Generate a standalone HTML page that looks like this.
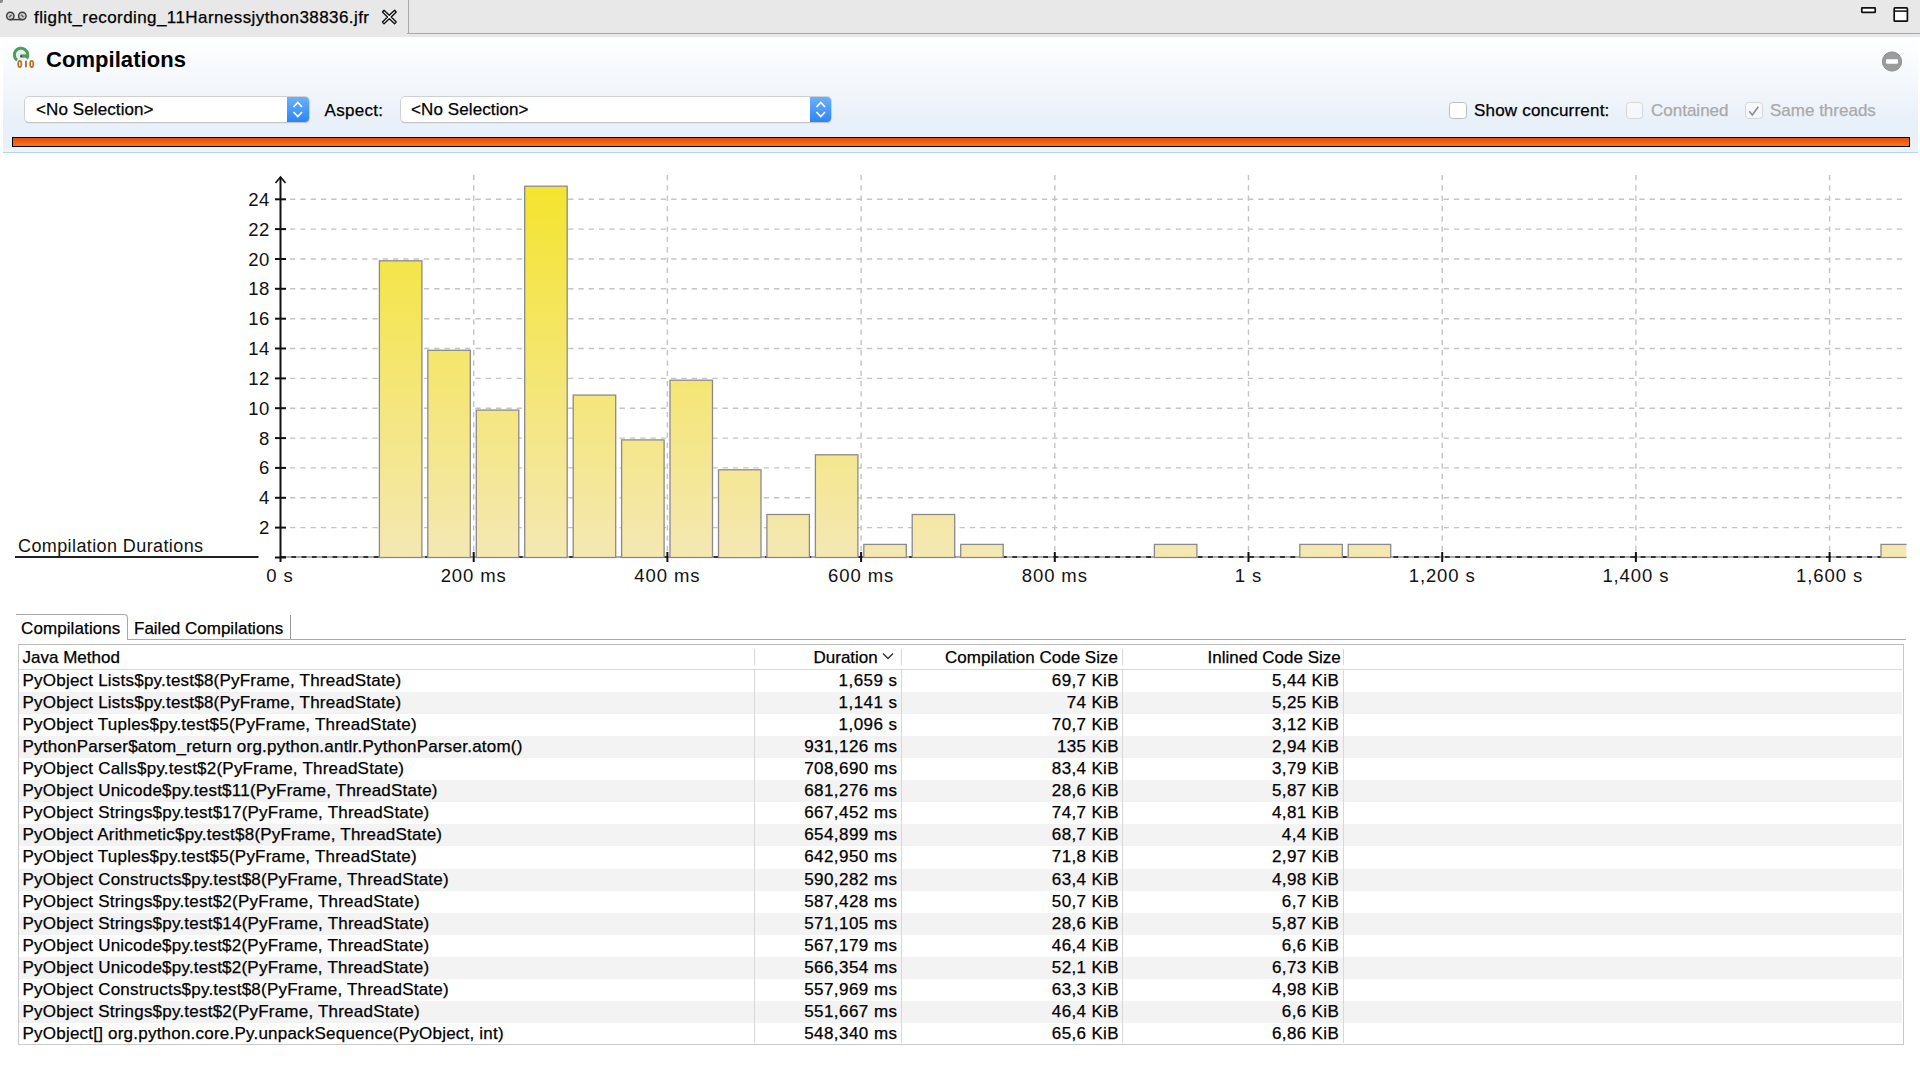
<!DOCTYPE html>
<html><head><meta charset="utf-8"><style>
*{box-sizing:border-box}
html,body{margin:0;padding:0;width:1920px;height:1070px;overflow:hidden;background:#fff;font-family:"Liberation Sans", sans-serif;color:#000}
.t17,.row span{-webkit-text-stroke:0.25px currentColor}
.abs{position:absolute}
#tabbar{position:absolute;left:0;top:0;width:1920px;height:37px;background:#e8e8e8}
.t17{font-size:17px;white-space:nowrap;line-height:1}
#hdr{position:absolute;left:3px;top:37px;width:1915px;height:116px;background:linear-gradient(#ffffff 0px,#fdfeff 8px,#f4f8fc 45px,#ecf2fa 75px,#e8f0f9 84px,#e8f0f9 110px,#f0f5fb 116px);border-bottom:1.5px solid #b9d4f0}
.combo{position:absolute;top:96.5px;height:25px;background:#fff;border-radius:4px;box-shadow:0 0 0 0.7px #c8c8c8, 0 0.8px 1px #b0b0b0}
.step{position:absolute;top:0;right:0;width:21.5px;height:25px;border-radius:0 4px 4px 0;background:linear-gradient(#6cb0fb,#2a86f7)}
.chk{position:absolute;top:101.5px;width:17.5px;height:17.5px;border:1px solid #bdbdbd;border-radius:3.5px;background:#fff}
.row{position:absolute;left:19px;width:1883px;height:22px}
.row span{position:absolute;top:2px;font-size:17px;line-height:1;white-space:nowrap}
.c0{left:3.5px;letter-spacing:0.22px}
.c1{right:1004.5px;letter-spacing:0.45px}
.c2{right:783.1px;letter-spacing:0.35px}
.c3{right:562.9px;letter-spacing:0.35px}
.vd{position:absolute;width:1.2px;background:#d8d8d8}
</style></head><body>
<div id="tabbar"></div>
<div class="abs" style="left:397px;top:-10px;width:11.5px;height:44px;border-right:1.5px solid #a9a9a9;border-top:1.5px solid #a9a9a9;border-top-right-radius:5px"></div>
<div class="abs" style="left:407px;top:32.5px;width:1513px;height:1.5px;background:#a9a9a9"></div>
<svg class="abs" style="left:4px;top:10px" width="24" height="14" viewBox="0 0 24 14">
 <circle cx="6.3" cy="6" r="3.7" fill="#d0d0d0" stroke="#3e3e3e" stroke-width="1.5"/>
 <circle cx="18.3" cy="6" r="3.7" fill="#d0d0d0" stroke="#3e3e3e" stroke-width="1.5"/>
 <line x1="6.3" y1="9.6" x2="18.3" y2="9.6" stroke="#3e3e3e" stroke-width="1.5"/>
 <line x1="5" y1="7.3" x2="7.6" y2="4.7" stroke="#5a5a5a" stroke-width="1.3"/>
 <line x1="17" y1="4.7" x2="19.6" y2="7.3" stroke="#5a5a5a" stroke-width="1.3"/>
</svg>
<div class="abs" style="left:-2.5px;top:-2.5px;width:5px;height:5px;border-radius:50%;background:#8a8a8a"></div>
<div class="abs t17" style="left:34px;top:8.8px;letter-spacing:0.42px">flight_recording_11Harnessjython38836.jfr</div>
<svg class="abs" style="left:380.5px;top:8.5px" width="17" height="16" viewBox="0 0 17 16">
 <path d="M1.5,3 L3,1.3 L8.3,6.3 L13.6,1.3 L15.2,3 L10.2,8 L15.2,13 L13.6,14.7 L8.3,9.7 L3,14.7 L1.5,13 L6.5,8 Z" fill="#fff" stroke="#111" stroke-width="1.4" stroke-linejoin="round"/>
</svg>
<svg class="abs" style="left:1858px;top:4px" width="54" height="22" viewBox="0 0 54 22">
 <rect x="3.8" y="3.9" width="13.4" height="4.4" rx="0.3" fill="#fff" stroke="#111" stroke-width="1.7"/>
 <rect x="36.2" y="3.9" width="13.2" height="13.3" rx="0.8" fill="#fff" stroke="#111" stroke-width="1.7"/>
 <line x1="36.2" y1="7.1" x2="49.4" y2="7.1" stroke="#111" stroke-width="1.5"/>
</svg>

<div id="hdr"></div>
<svg class="abs" style="left:8px;top:42px" width="32" height="30" viewBox="0 0 32 30">
 <g transform="translate(0,1)"><circle cx="13.1" cy="12" r="5.3" fill="#ececec"/>
 <path d="M18.6,15.7 A6.7,6.7 0 1 0 9.1,17.3" fill="none" stroke="#4b9d5d" stroke-width="3"/>
 <path d="M12.3,13.1 L20.8,12.9" stroke="#4b9d5d" stroke-width="3.4"/>
 <circle cx="13.3" cy="13.2" r="0.9" fill="#334"/></g>
 <ellipse cx="11.8" cy="22" rx="1.6" ry="3.1" fill="none" stroke="#b5712c" stroke-width="1.7"/>
 <rect x="17" y="18.4" width="1.9" height="7.2" rx="0.8" fill="#b5712c"/>
 <ellipse cx="23.7" cy="22" rx="1.6" ry="3.1" fill="none" stroke="#b5712c" stroke-width="1.7"/>
</svg>
<div class="abs" style="left:46px;top:49px;font-size:22px;font-weight:bold;line-height:1;white-space:nowrap;letter-spacing:0.05px">Compilations</div>
<svg class="abs" style="left:1880px;top:50px" width="24" height="24" viewBox="0 0 24 24">
 <circle cx="12" cy="11.5" r="9.6" fill="#9c9c9c" stroke="#8a8a8a" stroke-width="1"/>
 <rect x="6" y="9.3" width="12" height="4.4" rx="1" fill="#fff"/>
</svg>

<div class="combo" style="left:24.5px;width:284px"><div class="step"></div></div>
<div class="abs t17" style="left:36px;top:101px;letter-spacing:0.1px">&lt;No Selection&gt;</div>
<div class="abs t17" style="left:324.5px;top:102px;letter-spacing:0.3px">Aspect:</div>
<div class="combo" style="left:400.5px;width:430.5px"><div class="step"></div></div>
<div class="abs t17" style="left:411px;top:101px;letter-spacing:0.1px">&lt;No Selection&gt;</div>
<svg class="abs" style="left:287px;top:96.5px" width="22" height="25" viewBox="0 0 22 25">
 <polyline points="6.5,10 10.8,5.5 15,10" fill="none" stroke="#fff" stroke-width="1.7"/>
 <polyline points="6.5,15 10.8,19.5 15,15" fill="none" stroke="#fff" stroke-width="1.7"/>
</svg>
<svg class="abs" style="left:809.5px;top:96.5px" width="22" height="25" viewBox="0 0 22 25">
 <polyline points="6.5,10 10.8,5.5 15,10" fill="none" stroke="#fff" stroke-width="1.7"/>
 <polyline points="6.5,15 10.8,19.5 15,15" fill="none" stroke="#fff" stroke-width="1.7"/>
</svg>

<div class="chk" style="left:1449px"></div>
<div class="abs t17" style="left:1474px;top:102px;letter-spacing:0.2px">Show concurrent:</div>
<div class="chk" style="left:1625.5px;border-color:#d6d6d6;background:rgba(255,255,255,0.45)"></div>
<div class="abs t17" style="left:1651px;top:102px;color:#a9a9a9">Contained</div>
<div class="chk" style="left:1745px;border-color:#d6d6d6;background:rgba(255,255,255,0.45)"></div>
<svg class="abs" style="left:1745px;top:101.5px" width="18" height="18" viewBox="0 0 18 18">
 <polyline points="4.3,9.3 7.3,13 13.3,4.8" fill="none" stroke="#8a8a8a" stroke-width="1.6"/>
</svg>
<div class="abs t17" style="left:1770px;top:102px;color:#a9a9a9">Same threads</div>

<div class="abs" style="left:12px;top:136.5px;width:1897.5px;height:10.5px;border:1.5px solid #000;background:linear-gradient(#e44a18,#fb7a10)"></div>

<svg width="1920" height="1070" style="position:absolute;left:0;top:0">
<defs><linearGradient id="bg" gradientUnits="userSpaceOnUse" x1="0" y1="185" x2="0" y2="557"><stop offset="0" stop-color="#f4e42e"/><stop offset="1" stop-color="#f4e8b4"/></linearGradient><clipPath id="cl"><rect x="0" y="150" width="1906.5" height="430"/></clipPath></defs>
<line x1="290" y1="527.6" x2="1904" y2="527.6" stroke="#c4c4c4" stroke-width="1.4" stroke-dasharray="5.3 5"/>
<line x1="290" y1="497.8" x2="1904" y2="497.8" stroke="#c4c4c4" stroke-width="1.4" stroke-dasharray="5.3 5"/>
<line x1="290" y1="467.9" x2="1904" y2="467.9" stroke="#c4c4c4" stroke-width="1.4" stroke-dasharray="5.3 5"/>
<line x1="290" y1="438.1" x2="1904" y2="438.1" stroke="#c4c4c4" stroke-width="1.4" stroke-dasharray="5.3 5"/>
<line x1="290" y1="408.2" x2="1904" y2="408.2" stroke="#c4c4c4" stroke-width="1.4" stroke-dasharray="5.3 5"/>
<line x1="290" y1="378.4" x2="1904" y2="378.4" stroke="#c4c4c4" stroke-width="1.4" stroke-dasharray="5.3 5"/>
<line x1="290" y1="348.5" x2="1904" y2="348.5" stroke="#c4c4c4" stroke-width="1.4" stroke-dasharray="5.3 5"/>
<line x1="290" y1="318.7" x2="1904" y2="318.7" stroke="#c4c4c4" stroke-width="1.4" stroke-dasharray="5.3 5"/>
<line x1="290" y1="288.8" x2="1904" y2="288.8" stroke="#c4c4c4" stroke-width="1.4" stroke-dasharray="5.3 5"/>
<line x1="290" y1="259.0" x2="1904" y2="259.0" stroke="#c4c4c4" stroke-width="1.4" stroke-dasharray="5.3 5"/>
<line x1="290" y1="229.1" x2="1904" y2="229.1" stroke="#c4c4c4" stroke-width="1.4" stroke-dasharray="5.3 5"/>
<line x1="290" y1="199.3" x2="1904" y2="199.3" stroke="#c4c4c4" stroke-width="1.4" stroke-dasharray="5.3 5"/>
<line x1="473.7" y1="175" x2="473.7" y2="557" stroke="#c4c4c4" stroke-width="1.4" stroke-dasharray="5.3 5"/>
<line x1="667.4" y1="175" x2="667.4" y2="557" stroke="#c4c4c4" stroke-width="1.4" stroke-dasharray="5.3 5"/>
<line x1="861.1" y1="175" x2="861.1" y2="557" stroke="#c4c4c4" stroke-width="1.4" stroke-dasharray="5.3 5"/>
<line x1="1054.8" y1="175" x2="1054.8" y2="557" stroke="#c4c4c4" stroke-width="1.4" stroke-dasharray="5.3 5"/>
<line x1="1248.5" y1="175" x2="1248.5" y2="557" stroke="#c4c4c4" stroke-width="1.4" stroke-dasharray="5.3 5"/>
<line x1="1442.2" y1="175" x2="1442.2" y2="557" stroke="#c4c4c4" stroke-width="1.4" stroke-dasharray="5.3 5"/>
<line x1="1635.9" y1="175" x2="1635.9" y2="557" stroke="#c4c4c4" stroke-width="1.4" stroke-dasharray="5.3 5"/>
<line x1="1829.6" y1="175" x2="1829.6" y2="557" stroke="#c4c4c4" stroke-width="1.4" stroke-dasharray="5.3 5"/>
<line x1="281" y1="557.1" x2="1906" y2="557.1" stroke="#adadad" stroke-width="2"/>
<line x1="281" y1="557.1" x2="1906" y2="557.1" stroke="#333" stroke-width="2" stroke-dasharray="4.8 5.5"/>
<g clip-path="url(#cl)">
<rect x="379.4" y="260.8" width="42.5" height="296.7" fill="url(#bg)" stroke="#8a8a8a" stroke-width="1.3"/>
<rect x="427.8" y="350.3" width="42.5" height="207.2" fill="url(#bg)" stroke="#8a8a8a" stroke-width="1.3"/>
<rect x="476.3" y="410.1" width="42.5" height="147.4" fill="url(#bg)" stroke="#8a8a8a" stroke-width="1.3"/>
<rect x="524.7" y="186.2" width="42.5" height="371.3" fill="url(#bg)" stroke="#8a8a8a" stroke-width="1.3"/>
<rect x="573.2" y="395.1" width="42.5" height="162.4" fill="url(#bg)" stroke="#8a8a8a" stroke-width="1.3"/>
<rect x="621.6" y="439.9" width="42.5" height="117.6" fill="url(#bg)" stroke="#8a8a8a" stroke-width="1.3"/>
<rect x="670.0" y="380.2" width="42.5" height="177.3" fill="url(#bg)" stroke="#8a8a8a" stroke-width="1.3"/>
<rect x="718.5" y="469.8" width="42.5" height="87.8" fill="url(#bg)" stroke="#8a8a8a" stroke-width="1.3"/>
<rect x="766.9" y="514.5" width="42.5" height="43.0" fill="url(#bg)" stroke="#8a8a8a" stroke-width="1.3"/>
<rect x="815.4" y="454.8" width="42.5" height="102.7" fill="url(#bg)" stroke="#8a8a8a" stroke-width="1.3"/>
<rect x="863.8" y="544.4" width="42.5" height="13.1" fill="url(#bg)" stroke="#8a8a8a" stroke-width="1.3"/>
<rect x="912.2" y="514.5" width="42.5" height="43.0" fill="url(#bg)" stroke="#8a8a8a" stroke-width="1.3"/>
<rect x="960.7" y="544.4" width="42.5" height="13.1" fill="url(#bg)" stroke="#8a8a8a" stroke-width="1.3"/>
<rect x="1154.4" y="544.4" width="42.5" height="13.1" fill="url(#bg)" stroke="#8a8a8a" stroke-width="1.3"/>
<rect x="1299.8" y="544.4" width="42.5" height="13.1" fill="url(#bg)" stroke="#8a8a8a" stroke-width="1.3"/>
<rect x="1348.2" y="544.4" width="42.5" height="13.1" fill="url(#bg)" stroke="#8a8a8a" stroke-width="1.3"/>
<rect x="1881.0" y="544.4" width="42.5" height="13.1" fill="url(#bg)" stroke="#8a8a8a" stroke-width="1.3"/>
</g>
<line x1="280.5" y1="177" x2="280.5" y2="562" stroke="#111" stroke-width="2"/>
<polyline points="275.5,183 280.5,177 285.5,183" fill="none" stroke="#111" stroke-width="1.6"/>
<line x1="275" y1="527.6" x2="286" y2="527.6" stroke="#111" stroke-width="2"/>
<text x="270" y="534.1" text-anchor="end" font-family='"Liberation Sans"' font-size="18.5" letter-spacing="0.6" fill="#111">2</text>
<line x1="275" y1="497.8" x2="286" y2="497.8" stroke="#111" stroke-width="2"/>
<text x="270" y="504.3" text-anchor="end" font-family='"Liberation Sans"' font-size="18.5" letter-spacing="0.6" fill="#111">4</text>
<line x1="275" y1="467.9" x2="286" y2="467.9" stroke="#111" stroke-width="2"/>
<text x="270" y="474.4" text-anchor="end" font-family='"Liberation Sans"' font-size="18.5" letter-spacing="0.6" fill="#111">6</text>
<line x1="275" y1="438.1" x2="286" y2="438.1" stroke="#111" stroke-width="2"/>
<text x="270" y="444.6" text-anchor="end" font-family='"Liberation Sans"' font-size="18.5" letter-spacing="0.6" fill="#111">8</text>
<line x1="275" y1="408.2" x2="286" y2="408.2" stroke="#111" stroke-width="2"/>
<text x="270" y="414.8" text-anchor="end" font-family='"Liberation Sans"' font-size="18.5" letter-spacing="0.6" fill="#111">10</text>
<line x1="275" y1="378.4" x2="286" y2="378.4" stroke="#111" stroke-width="2"/>
<text x="270" y="384.9" text-anchor="end" font-family='"Liberation Sans"' font-size="18.5" letter-spacing="0.6" fill="#111">12</text>
<line x1="275" y1="348.5" x2="286" y2="348.5" stroke="#111" stroke-width="2"/>
<text x="270" y="355.0" text-anchor="end" font-family='"Liberation Sans"' font-size="18.5" letter-spacing="0.6" fill="#111">14</text>
<line x1="275" y1="318.7" x2="286" y2="318.7" stroke="#111" stroke-width="2"/>
<text x="270" y="325.2" text-anchor="end" font-family='"Liberation Sans"' font-size="18.5" letter-spacing="0.6" fill="#111">16</text>
<line x1="275" y1="288.8" x2="286" y2="288.8" stroke="#111" stroke-width="2"/>
<text x="270" y="295.3" text-anchor="end" font-family='"Liberation Sans"' font-size="18.5" letter-spacing="0.6" fill="#111">18</text>
<line x1="275" y1="259.0" x2="286" y2="259.0" stroke="#111" stroke-width="2"/>
<text x="270" y="265.5" text-anchor="end" font-family='"Liberation Sans"' font-size="18.5" letter-spacing="0.6" fill="#111">20</text>
<line x1="275" y1="229.1" x2="286" y2="229.1" stroke="#111" stroke-width="2"/>
<text x="270" y="235.6" text-anchor="end" font-family='"Liberation Sans"' font-size="18.5" letter-spacing="0.6" fill="#111">22</text>
<line x1="275" y1="199.3" x2="286" y2="199.3" stroke="#111" stroke-width="2"/>
<text x="270" y="205.8" text-anchor="end" font-family='"Liberation Sans"' font-size="18.5" letter-spacing="0.6" fill="#111">24</text>
<line x1="275" y1="557.5" x2="286" y2="557.5" stroke="#111" stroke-width="2"/>
<text x="280.0" y="582" text-anchor="middle" font-family='"Liberation Sans"' font-size="18.5" letter-spacing="0.9" fill="#111">0 s</text>
<line x1="473.7" y1="552" x2="473.7" y2="562" stroke="#111" stroke-width="2"/>
<text x="473.7" y="582" text-anchor="middle" font-family='"Liberation Sans"' font-size="18.5" letter-spacing="0.9" fill="#111">200 ms</text>
<line x1="667.4" y1="552" x2="667.4" y2="562" stroke="#111" stroke-width="2"/>
<text x="667.4" y="582" text-anchor="middle" font-family='"Liberation Sans"' font-size="18.5" letter-spacing="0.9" fill="#111">400 ms</text>
<line x1="861.1" y1="552" x2="861.1" y2="562" stroke="#111" stroke-width="2"/>
<text x="861.1" y="582" text-anchor="middle" font-family='"Liberation Sans"' font-size="18.5" letter-spacing="0.9" fill="#111">600 ms</text>
<line x1="1054.8" y1="552" x2="1054.8" y2="562" stroke="#111" stroke-width="2"/>
<text x="1054.8" y="582" text-anchor="middle" font-family='"Liberation Sans"' font-size="18.5" letter-spacing="0.9" fill="#111">800 ms</text>
<line x1="1248.5" y1="552" x2="1248.5" y2="562" stroke="#111" stroke-width="2"/>
<text x="1248.5" y="582" text-anchor="middle" font-family='"Liberation Sans"' font-size="18.5" letter-spacing="0.9" fill="#111">1 s</text>
<line x1="1442.2" y1="552" x2="1442.2" y2="562" stroke="#111" stroke-width="2"/>
<text x="1442.2" y="582" text-anchor="middle" font-family='"Liberation Sans"' font-size="18.5" letter-spacing="0.9" fill="#111">1,200 s</text>
<line x1="1635.9" y1="552" x2="1635.9" y2="562" stroke="#111" stroke-width="2"/>
<text x="1635.9" y="582" text-anchor="middle" font-family='"Liberation Sans"' font-size="18.5" letter-spacing="0.9" fill="#111">1,400 s</text>
<line x1="1829.6" y1="552" x2="1829.6" y2="562" stroke="#111" stroke-width="2"/>
<text x="1829.6" y="582" text-anchor="middle" font-family='"Liberation Sans"' font-size="18.5" letter-spacing="0.9" fill="#111">1,600 s</text>
<line x1="15" y1="557" x2="258.5" y2="557" stroke="#222" stroke-width="2"/>
<text x="18" y="551.5" font-family='"Liberation Sans"' font-size="18" letter-spacing="0.4" fill="#111">Compilation Durations</text>
</svg>

<!-- tabs -->
<div class="abs" style="left:15.5px;top:613.5px;width:112px;height:26px;border-top:1.5px solid #a8a8a8;border-right:1.5px solid #a8a8a8;border-top-right-radius:4px;background:#fff"></div>
<div class="abs t17" style="left:21px;top:620px;letter-spacing:0.1px">Compilations</div>
<div class="abs" style="left:127px;top:638.5px;width:1779px;height:1.5px;background:#a8a8a8"></div>
<div class="abs" style="left:290px;top:615px;width:1.3px;height:24px;background:#9a9a9a"></div>
<div class="abs t17" style="left:134px;top:620px">Failed Compilations</div>

<!-- table -->
<div class="abs" style="left:18px;top:643.5px;width:1885px;height:401px;background:#fff"></div>
<div class="abs" style="left:19px;top:669px;width:1883px;height:1.2px;background:#d9d9d9"></div>
<div class="abs t17" style="left:22.5px;top:648.5px">Java Method</div>
<div class="abs t17" style="left:813.5px;top:648.5px">Duration</div>
<svg class="abs" style="left:882px;top:652px" width="12" height="8" viewBox="0 0 12 8"><polyline points="1,1.5 6,6.5 11,1.5" fill="none" stroke="#333" stroke-width="1.4"/></svg>
<div class="abs t17" style="left:945px;top:648.5px">Compilation Code Size</div>
<div class="abs t17" style="left:1207.5px;top:648.5px">Inlined Code Size</div>
<div class="vd" style="left:754px;top:649px;height:16px"></div>
<div class="vd" style="left:901px;top:649px;height:16px"></div>
<div class="vd" style="left:1122px;top:649px;height:16px"></div>
<div class="vd" style="left:1343px;top:649px;height:16px"></div>
<div class="row" style="top:670.0px;background:#ffffff"><span class="c0">PyObject Lists$py.test$8(PyFrame, ThreadState)</span><span class="c1">1,659 s</span><span class="c2">69,7 KiB</span><span class="c3">5,44 KiB</span></div>
<div class="row" style="top:692.0px;background:#f3f3f3"><span class="c0">PyObject Lists$py.test$8(PyFrame, ThreadState)</span><span class="c1">1,141 s</span><span class="c2">74 KiB</span><span class="c3">5,25 KiB</span></div>
<div class="row" style="top:714.1px;background:#ffffff"><span class="c0">PyObject Tuples$py.test$5(PyFrame, ThreadState)</span><span class="c1">1,096 s</span><span class="c2">70,7 KiB</span><span class="c3">3,12 KiB</span></div>
<div class="row" style="top:736.1px;background:#f3f3f3"><span class="c0">PythonParser$atom_return org.python.antlr.PythonParser.atom()</span><span class="c1">931,126 ms</span><span class="c2">135 KiB</span><span class="c3">2,94 KiB</span></div>
<div class="row" style="top:758.2px;background:#ffffff"><span class="c0">PyObject Calls$py.test$2(PyFrame, ThreadState)</span><span class="c1">708,690 ms</span><span class="c2">83,4 KiB</span><span class="c3">3,79 KiB</span></div>
<div class="row" style="top:780.2px;background:#f3f3f3"><span class="c0">PyObject Unicode$py.test$11(PyFrame, ThreadState)</span><span class="c1">681,276 ms</span><span class="c2">28,6 KiB</span><span class="c3">5,87 KiB</span></div>
<div class="row" style="top:802.3px;background:#ffffff"><span class="c0">PyObject Strings$py.test$17(PyFrame, ThreadState)</span><span class="c1">667,452 ms</span><span class="c2">74,7 KiB</span><span class="c3">4,81 KiB</span></div>
<div class="row" style="top:824.4px;background:#f3f3f3"><span class="c0">PyObject Arithmetic$py.test$8(PyFrame, ThreadState)</span><span class="c1">654,899 ms</span><span class="c2">68,7 KiB</span><span class="c3">4,4 KiB</span></div>
<div class="row" style="top:846.4px;background:#ffffff"><span class="c0">PyObject Tuples$py.test$5(PyFrame, ThreadState)</span><span class="c1">642,950 ms</span><span class="c2">71,8 KiB</span><span class="c3">2,97 KiB</span></div>
<div class="row" style="top:868.5px;background:#f3f3f3"><span class="c0">PyObject Constructs$py.test$8(PyFrame, ThreadState)</span><span class="c1">590,282 ms</span><span class="c2">63,4 KiB</span><span class="c3">4,98 KiB</span></div>
<div class="row" style="top:890.5px;background:#ffffff"><span class="c0">PyObject Strings$py.test$2(PyFrame, ThreadState)</span><span class="c1">587,428 ms</span><span class="c2">50,7 KiB</span><span class="c3">6,7 KiB</span></div>
<div class="row" style="top:912.5px;background:#f3f3f3"><span class="c0">PyObject Strings$py.test$14(PyFrame, ThreadState)</span><span class="c1">571,105 ms</span><span class="c2">28,6 KiB</span><span class="c3">5,87 KiB</span></div>
<div class="row" style="top:934.6px;background:#ffffff"><span class="c0">PyObject Unicode$py.test$2(PyFrame, ThreadState)</span><span class="c1">567,179 ms</span><span class="c2">46,4 KiB</span><span class="c3">6,6 KiB</span></div>
<div class="row" style="top:956.7px;background:#f3f3f3"><span class="c0">PyObject Unicode$py.test$2(PyFrame, ThreadState)</span><span class="c1">566,354 ms</span><span class="c2">52,1 KiB</span><span class="c3">6,73 KiB</span></div>
<div class="row" style="top:978.7px;background:#ffffff"><span class="c0">PyObject Constructs$py.test$8(PyFrame, ThreadState)</span><span class="c1">557,969 ms</span><span class="c2">63,3 KiB</span><span class="c3">4,98 KiB</span></div>
<div class="row" style="top:1000.8px;background:#f3f3f3"><span class="c0">PyObject Strings$py.test$2(PyFrame, ThreadState)</span><span class="c1">551,667 ms</span><span class="c2">46,4 KiB</span><span class="c3">6,6 KiB</span></div>
<div class="row" style="top:1022.8px;background:#ffffff"><span class="c0">PyObject[] org.python.core.Py.unpackSequence(PyObject, int)</span><span class="c1">548,340 ms</span><span class="c2">65,6 KiB</span><span class="c3">6,86 KiB</span></div>
<div class="vd" style="left:754px;top:670px;height:373px"></div>
<div class="vd" style="left:901px;top:670px;height:373px"></div>
<div class="vd" style="left:1122px;top:670px;height:373px"></div>
<div class="vd" style="left:1343px;top:670px;height:373px"></div>
<div class="abs" style="left:18px;top:643.5px;width:1885.5px;height:401.5px;border:1.5px solid #c9c9c9;border-top-color:#bdbdbd"></div>
</body></html>
